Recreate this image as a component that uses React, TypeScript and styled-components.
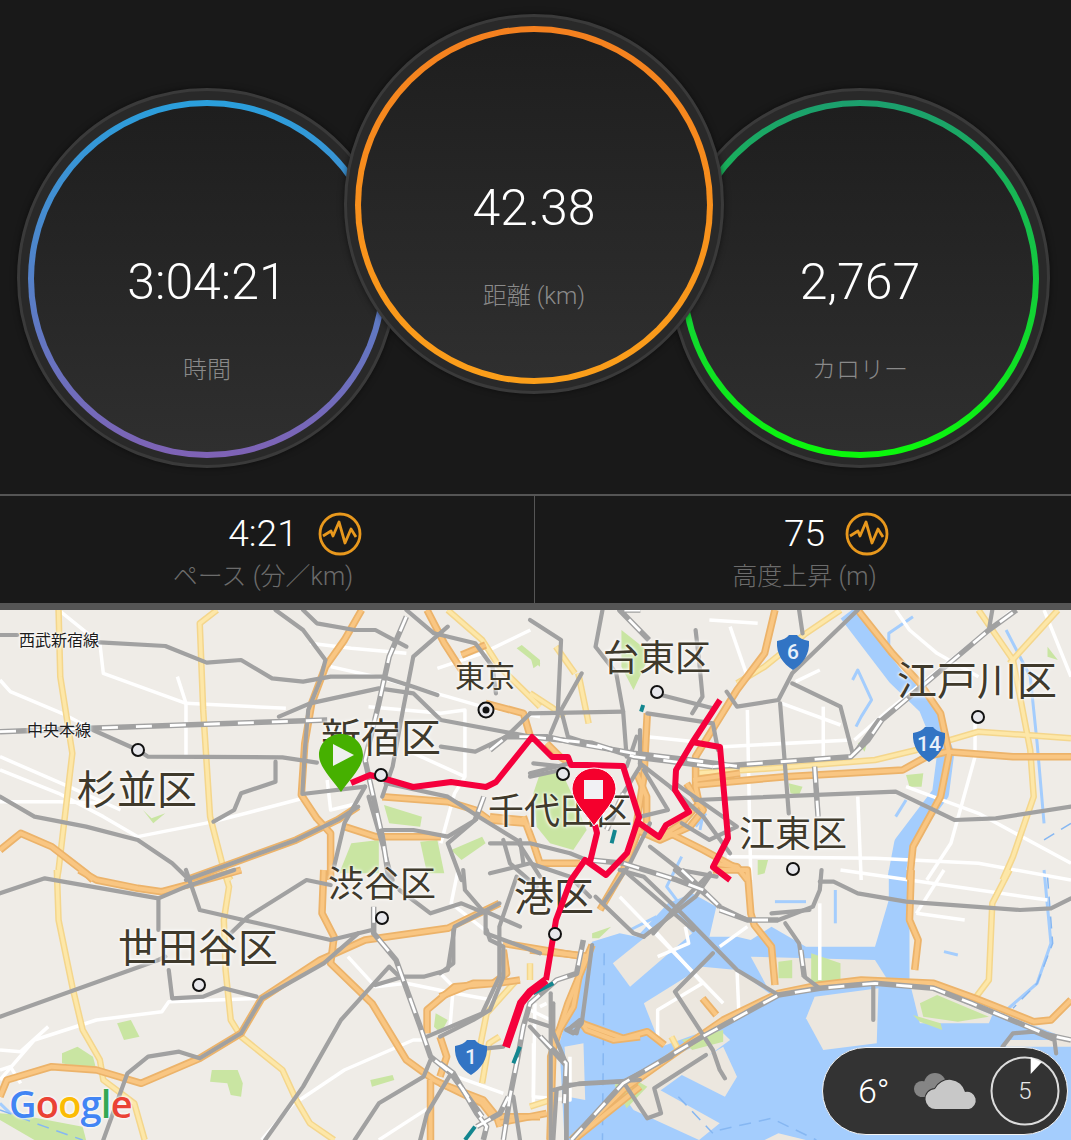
import React from 'react';
import styled, { createGlobalStyle } from 'styled-components';

const GlobalStyle = createGlobalStyle`
  html, body {
    margin: 0;
    padding: 0;
    background: #191919;
  }
`;

const CJK = `Roboto, "Noto Sans CJK JP", sans-serif`;

const Page = styled.div`
  width: 100%;
  height: 1140px;
  overflow: hidden;
  font-family: ${CJK};
`;

const Dials = styled.section`
  height: 494px;
  box-sizing: border-box;
  padding: 14px 0 0 17px;
  display: flex;
  align-items: flex-start;
  background: #191919;
`;

const Dial = styled.div<{ $raised?: boolean }>`
  width: 380px;
  height: 380px;
  flex: none;
  box-sizing: border-box;
  padding: 9px 8px 7px;
  border-radius: 50%;
  border: 3px solid #3a3a3a;
  background: #292929;
  display: flex;
  margin-top: ${(p) => (p.$raised ? '0' : '74px')};
  margin-right: ${(p) => (p.$raised ? '-54px' : '-53px')};
  position: relative;
  z-index: ${(p) => (p.$raised ? 2 : 1)};
  box-shadow: 0 0 6px rgba(0, 0, 0, 0.5);
`;

const Ring = styled.div<{ $from: string; $to: string }>`
  flex: 1;
  padding: 6px;
  border-radius: 50%;
  display: flex;
  background: linear-gradient(${(p) => p.$from}, ${(p) => p.$to});
`;

const Face = styled.div`
  flex: 1;
  box-sizing: border-box;
  padding-top: 146px;
  border-radius: 50%;
  display: flex;
  flex-direction: column;
  align-items: center;
  background: linear-gradient(#1e1e1e, #2f2f2f);
`;

const DialValue = styled.div`
  color: #fff;
  font-size: 50px;
  font-weight: 300;
  line-height: 60px;
`;

const DialLabel = styled.div`
  margin-top: 43px;
  color: #8a8a8a;
  font-size: 24px;
  line-height: 30px;
  font-weight: 300;
`;

const Stats = styled.section`
  height: 107px;
  display: flex;
  background: #191919;
  border-top: 2px solid #555;
  border-bottom: 7px solid #555;
`;

const Stat = styled.div<{ $side: 'left' | 'right' }>`
  box-sizing: border-box;
  padding-top: 16px;
  display: flex;
  flex-direction: column;
  align-items: center;
  width: ${(p) => (p.$side === 'left' ? '534px' : '537px')};
  padding-right: ${(p) => (p.$side === 'left' ? '8px' : '0')};
  padding-left: ${(p) => (p.$side === 'right' ? '3px' : '0')};
  border-left: ${(p) => (p.$side === 'right' ? '1px solid #555' : 'none')};
`;

const StatValue = styled.div`
  position: relative;
  color: #fff;
  font-size: 37px;
  font-weight: 300;
  line-height: 44px;
`;

const PulseIcon = styled.svg`
  position: absolute;
  left: 100%;
  top: 0;
  margin-left: 20px;
  width: 44px;
  height: 44px;
`;

const StatLabel = styled.div`
  margin-top: 6px;
  color: #6c6c6c;
  font-size: 25px;
  font-weight: 300;
  line-height: 30px;
  white-space: nowrap;
`;

const MapArea = styled.section`
  position: relative;
  height: 530px;
  overflow: hidden;
  background: #efece7;
`;

const MapDrawing = styled.svg`
  position: absolute;
  inset: 0;
  width: 1071px;
  height: 530px;
`;

const Water = styled.path`
  fill: #a4cdfd;
`;
const Channel = styled.path`
  fill: none;
  stroke: #a4cdfd;
  stroke-width: 3;
  stroke-linejoin: round;
  vector-effect: non-scaling-stroke;
`;
const River = styled.path`
  fill: none;
  stroke: #a4cdfd;
  stroke-width: 17;
  stroke-linejoin: round;
  vector-effect: non-scaling-stroke;
`;
const SeaLane = styled.path`
  fill: none;
  stroke: #86b7f2;
  stroke-width: 1.5;
  stroke-dasharray: 12 8;
  vector-effect: non-scaling-stroke;
`;
const Land = styled.path`
  fill: #ece7df;
`;
const Park = styled.path`
  fill: #c9e5a2;
`;
const Street = styled.path`
  fill: none;
  stroke: #fff;
  stroke-width: 3.5;
  stroke-linejoin: round;
  vector-effect: non-scaling-stroke;
`;
const YellowCase = styled.path`
  fill: none;
  stroke: #f4d68c;
  stroke-width: 6.5;
  stroke-linejoin: round;
  vector-effect: non-scaling-stroke;
`;
const YellowFill = styled.path`
  fill: none;
  stroke: #fde7a8;
  stroke-width: 3.5;
  stroke-linejoin: round;
  vector-effect: non-scaling-stroke;
`;
const OrangeCase = styled.path`
  fill: none;
  stroke: #ecb36a;
  stroke-width: 7.5;
  stroke-linejoin: round;
  vector-effect: non-scaling-stroke;
`;
const OrangeFill = styled.path`
  fill: none;
  stroke: #f9c682;
  stroke-width: 4;
  stroke-linejoin: round;
  vector-effect: non-scaling-stroke;
`;
const Rail = styled.path`
  fill: none;
  stroke: #a1a1a1;
  stroke-width: 4.2;
  stroke-linejoin: round;
  stroke-linecap: round;
  vector-effect: non-scaling-stroke;
`;
const MainLine = styled.path`
  fill: none;
  stroke: #a1a1a1;
  stroke-width: 5.5;
  stroke-linejoin: round;
  vector-effect: non-scaling-stroke;
`;
const MainLineDash = styled.path`
  fill: none;
  stroke: #fff;
  stroke-width: 2.8;
  stroke-dasharray: 16 18;
  vector-effect: non-scaling-stroke;
`;
const Teal = styled.path`
  fill: none;
  stroke: #13868f;
  stroke-width: 4;
  stroke-linejoin: round;
  vector-effect: non-scaling-stroke;
`;
const Route = styled.path<{ $thick?: boolean }>`
  fill: none;
  stroke: #f5003c;
  stroke-width: ${(p) => (p.$thick ? 8 : 6)};
  stroke-linejoin: round;
  stroke-linecap: butt;
`;
const Stop = styled.circle`
  fill: #e8e8ec;
  stroke: #111;
  stroke-width: 2;
`;
const ShieldShape = styled.path`
  fill: #3274c4;
`;
const ShieldNumber = styled.text`
  fill: #e8f0fa;
  font-family: Roboto, sans-serif;
  font-size: 21px;
  font-weight: 500;
  text-anchor: middle;
`;

const PlaceName = styled.span<{ $x: number; $y: number; $size: number }>`
  position: absolute;
  left: ${(p) => p.$x}px;
  top: ${(p) => p.$y - 613}px;
  transform: translate(-50%, -50%);
  white-space: nowrap;
  color: #3f3a2c;
  font-family: "Noto Sans CJK JP", sans-serif;
  font-size: ${(p) => p.$size}px;
  line-height: 1;
  font-weight: 400;
  text-shadow: 0 0 3px rgba(255, 255, 255, 0.95), 0 0 3px rgba(255, 255, 255, 0.95),
    0 0 5px rgba(255, 255, 255, 0.7);
`;

const LineName = styled(PlaceName)`
  color: #1c1c1c;
`;

const PinIcon = styled.svg<{ $x: number; $y: number }>`
  position: absolute;
  left: ${(p) => p.$x}px;
  top: ${(p) => p.$y - 610}px;
  width: 46px;
  height: 60px;
`;

const GoogleMark = styled.div`
  position: absolute;
  left: 9px;
  bottom: 17px;
  font-family: "Open Sans", sans-serif;
  font-size: 38px;
  line-height: 40px;
  letter-spacing: -0.8px;
  font-weight: 600;
  text-shadow: 0 0 3px #fff, 0 0 3px #fff;
`;

const Letter = styled.span<{ $c: string }>`
  color: ${(p) => p.$c};
`;

const Weather = styled.div`
  position: absolute;
  left: 822px;
  bottom: 5px;
  width: 246px;
  height: 88px;
  box-sizing: border-box;
  padding: 0 7px 0 35px;
  display: flex;
  align-items: center;
  border-radius: 44px;
  border: 1px solid #f4f4f4;
  background: #333;
`;

const Temp = styled.div`
  width: 54px;
  color: #fff;
  font-size: 34px;
  font-weight: 300;
`;

const CloudIcon = styled.svg`
  width: 66px;
  height: 40px;
  flex: none;
`;

const Timer = styled.div`
  position: relative;
  margin-left: auto;
  width: 70px;
  height: 70px;
  display: flex;
  align-items: center;
  justify-content: center;
  color: #e8e8e8;
  font-size: 24px;
  font-weight: 300;
`;

const TimerDial = styled.svg`
  position: absolute;
  inset: 0;
`;

const NW = 'translate(0 610) scale(.3444 .3333)';
const NE = 'translate(530 610) scale(.345 .3333)';
const SW = 'translate(0 870) scale(.3444 .3333)';
const SE = 'translate(530 870) scale(.345 .3333)';
const C1 = 'translate(490 730) scale(.3333)';
const C2 = 'translate(440 930) scale(.3333)';

type Tile = Partial<Record<
  'water' | 'channel' | 'river' | 'lane' | 'land' | 'park' | 'street' | 'yellow' | 'orange' | 'rail' | 'main' | 'teal',
  string[]
>> & { t: string };

const tiles: Tile[] = [
  {
    t: NW,
    park: [
      'M1500 115 1568 170 1568 150 1515 105Z',
      'M1115 585 1225 620 1220 650 1130 640Z',
      'M1020 700 1100 690 1100 790 985 790Z',
      'M1220 695 1270 690 1290 790 1240 790Z',
      'M1310 720 1400 680 1410 700 1340 750Z',
      'M415 600 440 625 480 610 445 640Z',
    ],
    street: [
      'M170 0 290 100 300 190 540 280 830 295',
      'M0 210 30 245 180 310 290 370',
      'M0 440 200 530 350 600',
      'M0 480 170 550 300 620 400 680 620 635 880 565',
      'M0 575 170 575 300 580',
      'M515 200 540 280 540 440',
      'M960 170 1110 205 1300 260 1400 290 1568 320',
      'M900 100 1020 115 1180 130',
      'M1070 290 1280 310 1350 300 1350 500 1320 550 1280 700',
      'M1270 175 1400 130 1540 60',
      'M1180 420 1350 500',
      'M950 510 960 600 1040 580',
    ],
    yellow: [
      'M630 0 580 40 590 300 610 620 650 780 670 810',
      'M170 0 175 200 210 430 170 780 165 810',
      'M1300 0 1400 90 1450 170 1568 290',
    ],
    orange: [
      'M1050 0 1000 90 945 170 905 280 885 400 875 555 920 625 960 670 960 810',
      'M0 720 60 670 150 710 250 790 270 810',
      'M540 810 700 750 860 690 980 630 1040 590',
      'M1110 560 1300 575 1380 600 1420 630 1530 640',
      'M1240 0 1290 100 1340 180',
      'M1340 135 1410 105',
      'M1410 280 1520 310 1540 380',
      'M1000 650 1090 680 1280 680',
    ],
    rail: [
      'M0 75 50 75',
      'M290 97 480 108 600 158 700 150 790 205 880 215 960 200 1110 200 1200 230 1270 255',
      'M270 360 400 420 430 440 820 442 920 458',
      'M800 455 800 515 700 550 680 600 620 635',
      'M0 560 100 620 250 650 400 690 500 760 550 810',
      'M800 0 880 60 945 150 930 210 895 300 885 420 878 552 1060 530',
      'M540 810 700 750 860 690 980 630 1040 590',
      'M810 320 900 280 1100 235 1200 250 1280 330 1540 380',
      'M880 0 920 40 1030 60 1090 60 1180 110',
      'M1280 410 1380 425 1470 380 1540 310',
      'M1300 50 1200 140 1170 300 1140 470 1110 560',
      'M1180 0 1260 70 1380 100 1430 170 1440 250',
      'M1120 520 1300 560 1390 620 1500 690 1568 800',
      'M1380 630 1300 700 1340 810',
      'M1110 660 1200 660 1300 680 1380 630',
      'M1060 530 1000 640 970 770',
      'M1070 560 1140 810',
    ],
    main: [
      'M0 365 260 355 950 330',
      'M1180 20 1130 140 1100 280 1060 450 1110 680 1130 810',
      'M1405 560 1380 630',
    ],
  },
  {
    t: NE,
    river: ['M920 10 1060 200 1150 290 1205 430 1190 550 1080 700 1060 810'],
    channel: [
      'M1040 110 1040 70 1110 20',
      'M935 210 950 180 990 270 960 320 945 350',
      'M1380 60 1450 200 1470 400 1490 640',
      'M1060 620 1090 570',
      'M30 510 60 590',
      'M480 650 510 610',
    ],
    lane: ['M1490 690 1568 640'],
    park: [
      'M1090 495 1140 490 1135 530 1100 530Z',
      'M750 520 790 530 780 555 755 550Z',
      'M265 60 350 130 300 240 265 170Z',
      'M660 750 690 750 680 790 660 795Z',
      'M0 135 30 160 10 175Z',
      'M950 400 980 385 970 425Z',
      'M1500 110 1530 150 1500 140Z',
    ],
    street: [
      'M1060 0 1100 60 1180 130 1300 200',
      'M630 300 640 810',
      'M730 280 900 345',
      'M850 290 850 440',
      'M560 410 930 390',
      'M1290 340 1290 440 1220 700 1150 810',
      'M950 560 960 810',
      'M570 740 1000 745 1300 760 1568 810',
      'M840 180 770 215',
      'M1090 530 1300 610 1568 760',
      'M1400 0 1040 300 940 390',
      'M1490 0 1568 200',
      'M520 30 660 40',
      'M340 380 520 400',
      'M580 50 630 200',
    ],
    yellow: [
      'M480 490 700 475 1000 450 1120 420 1300 365 1568 385',
      'M1300 0 1400 150 1450 420 1460 560 1400 740 1370 810',
      'M900 0 800 70 680 170 600 220',
      'M1530 0 1390 160',
      'M140 190 170 340',
      'M0 250 60 290 100 320',
      'M75 110 130 190',
    ],
    orange: [
      'M710 0 680 130 600 240 540 340 480 440 480 530 490 580 440 640 380 680',
      'M480 525 740 500 1080 480 1150 440 1210 425 1400 440 1568 440',
      'M950 0 1050 130 1130 220 1190 310 1215 430 1190 560 1110 710 1100 810',
      'M530 760 600 770 630 810',
      'M340 310 330 500 300 700',
    ],
    rail: [
      'M780 0 790 70',
      'M950 0 760 190 720 270 600 290 570 245',
      'M760 220 900 290 935 430',
      'M725 280 750 610',
      'M340 310 530 340 545 420',
      'M360 250 530 295',
      'M480 60 490 150 500 260 470 310',
      'M0 310 270 305',
      'M480 570 1060 545 1230 630 1350 625 1568 590',
      'M0 30 90 90 80 320 60 370',
      'M210 0 190 110 250 190 270 305 280 440',
      'M150 190 90 300 110 380 170 400',
      'M0 500 90 480',
      'M330 480 400 600 320 620',
      'M420 520 600 650 520 690 440 640',
      'M1340 0 1330 60',
      'M940 430 1010 330',
    ],
    main: [
      'M530 470 930 440 980 390 1020 330 1330 60 1410 0',
      'M825 470 835 620',
      'M0 380 180 400 300 440 530 470',
      'M320 0 260 0 345 90',
    ],
    teal: ['M328 285 322 305'],
  },
  {
    t: SW,
    channel: ['M0 700 30 730 120 760'],
    lane: ['M0 720 130 770 240 810'],
    park: [
      'M340 460 380 450 405 500 360 510Z',
      'M180 550 225 530 270 560 280 600 180 580Z',
      'M615 600 690 600 705 640 700 680 670 675 660 640 610 635Z',
      'M1075 630 1140 615 1145 630 1080 650Z',
      'M1265 430 1300 450 1280 490 1260 470Z',
      'M0 730 60 735 240 770 250 810 100 810 0 750Z',
    ],
    street: [
      'M0 630 100 510 280 450 470 425 490 395 750 385',
      'M0 540 60 545 140 470',
      'M0 600 30 590 60 640',
      'M870 690 1000 600 1200 510 1240 510',
      'M760 810 860 690',
      'M1010 260 1090 350 1180 340 1320 370 1430 390',
      'M1330 0 1310 100 1420 190',
      'M1100 810 1250 710',
    ],
    yellow: [
      'M650 0 665 50 650 150 655 300 670 450 700 500 820 600 860 690 900 760 970 810',
      'M165 0 170 150 210 350 240 480 290 570 300 630 390 700 420 810',
      'M1450 500 1420 520 1400 640',
    ],
    orange: [
      'M230 0 280 30 400 55 470 65 560 40 700 0',
      'M940 0 935 130 970 200 960 280 1080 400 1180 570 1260 630 1400 700 1430 740 1568 740',
      'M0 680 20 630 150 590 280 600 410 640 580 565 700 490 760 385 930 270 1060 210 1300 175 1450 100',
      'M1250 630 1250 810',
      'M1240 490 1240 420 1320 350 1440 340 1470 310 1460 240',
    ],
    rail: [
      'M0 70 130 25 460 85 460 180',
      'M460 85 540 50 680 0',
      'M540 0 580 120 960 210 1080 180',
      'M0 440 460 270 480 260',
      'M670 190 720 140 890 30 960 45',
      'M490 300 500 385 590 380 650 355 745 380',
      'M300 810 370 610 430 560 520 545 580 565 700 490 760 385 940 280 1040 190',
      'M770 810 880 650 990 450 1130 290 1160 320 1230 320 1300 300 1320 170 1450 100',
      'M1030 810 1100 700 1230 620 1250 570',
      'M1090 345 1170 320',
      'M1240 500 1400 430 1450 320 1450 170 1500 20',
      'M1160 60 1250 130 1340 100 1410 130 1410 190 1568 250',
      'M1345 0 1350 60 1400 120 1510 170',
      'M1220 810 1240 730 1310 610',
    ],
    main: [
      'M1085 110 1085 190 1150 270 1220 470 1250 560 1310 610 1400 740',
    ],
  },
  {
    t: SE,
    water: [
      'M100 810 85 520 145 310 180 215 260 190 310 200 400 100 470 70 540 110 520 200 600 200 640 210 700 170 800 230 1000 230 1040 90 1040 0 1100 0 1100 340 1170 350 1330 430 1470 470 1568 510 1568 810Z',
    ],
    channel: [
      'M1490 0 1510 220 1470 340 1370 430',
      'M710 95 800 95',
      'M885 60 885 160',
      'M1200 245 1240 255',
      'M385 450 480 400',
      'M530 385 570 320',
      'M650 260 700 240',
    ],
    land: [
      'M240 280 420 130 470 190 290 350Z',
      'M330 400 500 290 600 300 700 375 540 470 380 530Z',
      'M430 610 560 530 600 620 565 680Z',
      'M800 445 825 380 1010 355 1005 520 850 540Z',
      'M245 640 560 490 580 510 300 720Z',
      'M360 650 550 760 490 810 300 720Z',
      'M100 530 155 520 160 690 110 680Z',
      'M680 810 720 790 800 810Z',
      'M640 260 1000 270 1040 335 700 375Z',
      'M1105 355 1170 360 1340 435 1330 460 1130 460Z',
      'M1380 510 1568 510 1568 530 1380 530Z',
    ],
    park: [
      'M720 275 760 270 760 325 720 325Z',
      'M815 250 900 280 900 345 815 340Z',
      'M1130 400 1180 375 1330 440 1240 455 1140 440Z',
      'M1110 435 1190 460 1195 480 1130 455Z',
      'M245 645 290 620 340 650 280 715Z',
      'M180 190 235 170 200 205 180 205Z',
      'M440 510 560 480 560 515 470 540Z',
    ],
    lane: [
      'M1500 20 1515 220 1470 340 1400 415',
      'M215 250 210 810',
      'M430 680 530 790',
      'M550 780 700 745 830 810',
    ],
    street: [
      'M260 80 560 400',
      'M360 180 500 340',
      'M370 500 370 420 500 340',
      'M600 300 605 420',
      'M550 230 630 170',
      'M1120 130 1200 0',
      'M900 0 1500 90',
      'M1120 130 1260 150',
      'M840 100 840 330',
      'M0 420 60 450 60 600',
      'M10 520 10 700',
      'M450 170 460 220 370 260',
    ],
    yellow: [
      'M1390 0 1340 100 1330 330 1290 385',
      'M410 500 430 540',
      'M0 710 60 690',
    ],
    orange: [
      'M120 810 270 660 420 550 560 450 720 370 840 345 960 330 1170 340 1290 385 1460 455 1510 450 1568 390',
      'M530 0 630 0 640 130 650 165 700 230 710 345',
      'M1105 0 1100 150 1125 210 1115 300',
      'M500 385 540 435',
      'M150 460 270 505 340 485 390 525',
      'M180 225 110 400 60 560 60 810',
      'M0 240 180 260',
    ],
    rail: [
      'M420 0 550 110 630 150 720 150 820 110 840 60 845 0',
      'M840 35 880 35 950 70 1090 95 1420 120 1510 115 1568 85',
      'M700 130 810 120',
      'M740 160 780 220 795 320 840 355',
      'M530 250 420 365 530 540 550 600 565 625',
      'M720 375 600 300 430 120 330 20 260 0',
      'M270 635 340 745 380 730 360 655 510 555',
      'M100 645 270 635 410 560',
      'M995 350 995 450',
      'M1370 530 1400 490 1460 485 1520 510 1525 550',
      'M330 200 480 80 520 20',
      'M190 80 300 190 330 200',
      'M140 460 105 480 125 490 150 460 180 225',
      'M0 450 60 470 105 580 105 810',
      'M60 370 60 510 60 810',
    ],
    main: [
      'M120 810 270 640 500 500 720 375 840 355 1000 340 1170 355 1280 400 1500 495 1568 510',
      'M550 120 630 150 720 150',
      'M440 0 550 110',
      'M30 500 105 580 100 700',
      'M785 240 795 320',
    ],
  },
  {
    t: C1,
    park: ['M150 130 215 125 240 180 290 300 250 360 180 340 140 290 130 190Z'],
    channel: ['M575 380 530 470 590 550 600 500', 'M640 250 630 300', 'M420 600 500 560'],
    orange: [
      'M590 160 620 210 640 240 600 290 510 330 440 300',
      'M440 130 470 200 470 280',
      'M610 150 750 130',
      'M100 260 130 340 150 400 270 400',
      'M0 260 100 270',
      'M520 300 640 360 750 420',
      'M450 290 400 420 330 540',
      'M170 40 210 80 240 100',
    ],
    rail: [
      'M0 340 120 340 240 370 290 390',
      'M40 330 60 400 140 470',
      'M90 330 100 400',
      'M130 100 220 110',
      'M450 100 540 170 640 260 720 370',
      'M480 280 420 400 340 520',
      'M400 420 610 600',
      'M660 430 560 530 490 610',
      'M480 350 570 420 680 440',
      'M0 430 120 400 240 440 300 500',
      'M450 0 450 110 400 190',
      'M440 20 410 110',
      'M120 130 240 100',
    ],
    main: ['M0 60 50 20 170 20 260 40 430 70 600 90 750 110', 'M300 390 400 400 560 450 640 480', 'M400 190 350 300'],
    teal: ['M375 300 365 340'],
  },
  {
    t: C2,
    orange: [
      'M0 200 100 160 170 160 240 150',
      'M190 40 430 80',
      'M190 60 200 130 160 160',
      'M0 320 20 380 0 440',
      'M0 460 130 510 170 560 180 590',
      'M170 580 320 550',
      'M430 70 400 230 340 330 330 630',
      'M420 270 440 300 520 330 600 320',
      'M400 630 600 470',
    ],
    yellow: ['M120 350 140 250 230 150', 'M270 100 270 150'],
    rail: [
      'M0 130 40 100 40 0',
      'M0 320 100 270 150 240 190 140 190 50 150 30 140 0',
      'M190 350 140 355',
      'M340 480 420 460 600 450',
      'M270 290 380 410 380 630',
      'M395 290 420 270 410 310 385 300',
      'M340 220 340 300',
      'M340 630 350 480',
      'M220 500 240 630',
    ],
    street: ['M285 220 280 500 390 510 390 380', 'M300 230 320 220', 'M50 440 190 490', 'M0 130 40 170 30 290'],
    main: ['M0 400 40 430 110 550 140 590 130 630', 'M190 630 210 500 230 400 250 290 270 220 350 150 410 130 430 30', 'M110 590 180 550 205 500'],
    teal: ['M220 400 240 350', 'M280 190 340 160', 'M75 630 105 590'],
  },
];

const renderLayer = (key: keyof Tile, El: any) =>
  tiles.flatMap((tile) =>
    ((tile[key] as string[] | undefined) ?? []).map((d, i) => (
      <El key={`${tile.t}${key}${i}`} transform={tile.t} d={d} />
    )),
  );

const places = [
  { name: '杉並区', x: 137, y: 790, size: 40 },
  { name: '新宿区', x: 381, y: 738, size: 40 },
  { name: '東京', x: 485, y: 677, size: 30 },
  { name: '台東区', x: 657, y: 658, size: 36 },
  { name: '江戸川区', x: 977, y: 681, size: 40 },
  { name: '千代田区', x: 560, y: 811, size: 36 },
  { name: '江東区', x: 793, y: 834, size: 36 },
  { name: '渋谷区', x: 382, y: 884, size: 36 },
  { name: '港区', x: 554, y: 897, size: 40 },
  { name: '世田谷区', x: 198, y: 948, size: 40 },
];

const stops = [
  [138, 750],
  [381, 775],
  [563, 774],
  [657, 692],
  [978, 717],
  [793, 869],
  [382, 918],
  [199, 985],
  [555, 934],
];

const routes = [
  'M351 783 370 775 389 780 413 787 451 782 486 787 496 782 532 737 552 757 568 757 571 765 587 765 623 766 639 817 627 853 606 875 585 860 571 880 556 920 546 980',
  'M595 825 597 833 590 862',
  'M639 823 659 837 666 825 689 812 675 790 676 770 692 743 720 700',
  'M692 742 720 747 728 838 713 867 730 880',
];

const Shield = ({ x, y, n }: { x: number; y: number; n: string }) => (
  <g transform={`translate(${x} ${y})`}>
    <ShieldShape d="M-16 -11 C-10 -12 -6 -14 -4 -17 L4 -17 C6 -14 10 -12 16 -11 C17 2 10 12 0 18 C-10 12 -17 2 -16 -11Z" />
    <ShieldNumber y={7}>{n}</ShieldNumber>
  </g>
);

const Pulse = () => (
  <PulseIcon viewBox="0 0 44 44">
    <circle cx="22" cy="22" r="20" fill="none" stroke="#e8981d" strokeWidth="2.8" />
    <polyline
      points="5,24 13,19 15,24 21,10 27,31 33,17 38,25"
      fill="none"
      stroke="#e8981d"
      strokeWidth="2.8"
      strokeLinejoin="round"
    />
  </PulseIcon>
);

const pinPath = 'M23 2 C10 2 1 12 1 23 C1 35 14 47 23 60 C32 47 45 35 45 23 C45 12 36 2 23 2Z';

export default function App() {
  return (
    <Page>
      <GlobalStyle />
      <Dials>
        <Dial>
          <Ring $from="#2a9fdc" $to="#7f62b5">
            <Face>
              <DialValue>3:04:21</DialValue>
              <DialLabel>時間</DialLabel>
            </Face>
          </Ring>
        </Dial>
        <Dial $raised>
          <Ring $from="#f4801f" $to="#fb9f1a">
            <Face>
              <DialValue>42.38</DialValue>
              <DialLabel>距離 (km)</DialLabel>
            </Face>
          </Ring>
        </Dial>
        <Dial>
          <Ring $from="#1c9f6e" $to="#0bf80b">
            <Face>
              <DialValue>2,767</DialValue>
              <DialLabel>カロリー</DialLabel>
            </Face>
          </Ring>
        </Dial>
      </Dials>

      <Stats>
        <Stat $side="left">
          <StatValue>
            4:21
            <Pulse />
          </StatValue>
          <StatLabel>ペース (分／km)</StatLabel>
        </Stat>
        <Stat $side="right">
          <StatValue>
            75
            <Pulse />
          </StatValue>
          <StatLabel>高度上昇 (m)</StatLabel>
        </Stat>
      </Stats>

      <MapArea>
        <MapDrawing viewBox="0 610 1071 530">
          {renderLayer('water', Water)}
          {renderLayer('river', River)}
          {renderLayer('channel', Channel)}
          {renderLayer('land', Land)}
          {renderLayer('park', Park)}
          {renderLayer('lane', SeaLane)}
          {renderLayer('street', Street)}
          {renderLayer('yellow', YellowCase)}
          {renderLayer('yellow', YellowFill)}
          {renderLayer('orange', OrangeCase)}
          {renderLayer('orange', OrangeFill)}
          {renderLayer('rail', Rail)}
          {renderLayer('main', MainLine)}
          {renderLayer('main', MainLineDash)}
          {renderLayer('teal', Teal)}
          <Shield x={793} y={652} n="6" />
          <Shield x={929} y={744} n="14" />
          <Shield x={471} y={1057} n="1" />
        </MapDrawing>

        {places.map((p) => (
          <PlaceName key={p.name} $x={p.x} $y={p.y} $size={p.size}>
            {p.name}
          </PlaceName>
        ))}
        <LineName $x={59} $y={642} $size={16}>西武新宿線</LineName>
        <LineName $x={59} $y={732} $size={16}>中央本線</LineName>

        <MapDrawing viewBox="0 610 1071 530">
          {routes.map((d) => (
            <Route key={d} d={d} />
          ))}
          <Route $thick d="M546 980 530 992 521 1003 506 1047" />
          {stops.map(([x, y]) => (
            <Stop key={x} cx={x} cy={y} r={6} />
          ))}
          <Stop cx={486} cy={710} r={7.5} />
          <circle cx={486} cy={710} r={3.5} fill="#111" />
        </MapDrawing>

        <PinIcon $x={318} $y={732} viewBox="0 0 46 60">
          <path d={pinPath} fill="#46b000" />
          <path d="M15 12 L36 23 L15 34Z" fill="#eef0ee" />
        </PinIcon>
        <PinIcon $x={571} $y={766} viewBox="0 0 46 60">
          <path d={pinPath} fill="#f5002d" stroke="#fff" strokeWidth="1" />
          <rect x="13" y="14" width="19" height="19" fill="#f1f1f4" />
        </PinIcon>

        <GoogleMark>
          <Letter $c="#4285f4">G</Letter>
          <Letter $c="#ea4335">o</Letter>
          <Letter $c="#fbbc05">o</Letter>
          <Letter $c="#4285f4">g</Letter>
          <Letter $c="#34a853">l</Letter>
          <Letter $c="#ea4335">e</Letter>
        </GoogleMark>

        <Weather>
          <Temp>6°</Temp>
          <CloudIcon viewBox="0 0 66 40">
            <circle cx="23" cy="13" r="11" fill="#858585" />
            <circle cx="10" cy="18" r="8" fill="#858585" />
            <rect x="8" y="16" width="20" height="10" fill="#858585" />
            <path
              d="M24 38 A10 10 0 0 1 23 18 A16 16 0 0 1 53 21 A8.5 8.5 0 0 1 57 38Z"
              fill="#c8c8c8"
              stroke="#333"
              strokeWidth="2"
              paintOrder="stroke"
            />
          </CloudIcon>
          <Timer>
            <TimerDial viewBox="0 0 70 70" width="70" height="70">
              <circle cx="35" cy="35" r="33.5" fill="none" stroke="#dcdcdc" strokeWidth="2" />
              <path d="M40.7 18 L40.7 1.3 L51.7 6.3Z" fill="#fff" />
            </TimerDial>
            5
          </Timer>
        </Weather>
      </MapArea>
    </Page>
  );
}
